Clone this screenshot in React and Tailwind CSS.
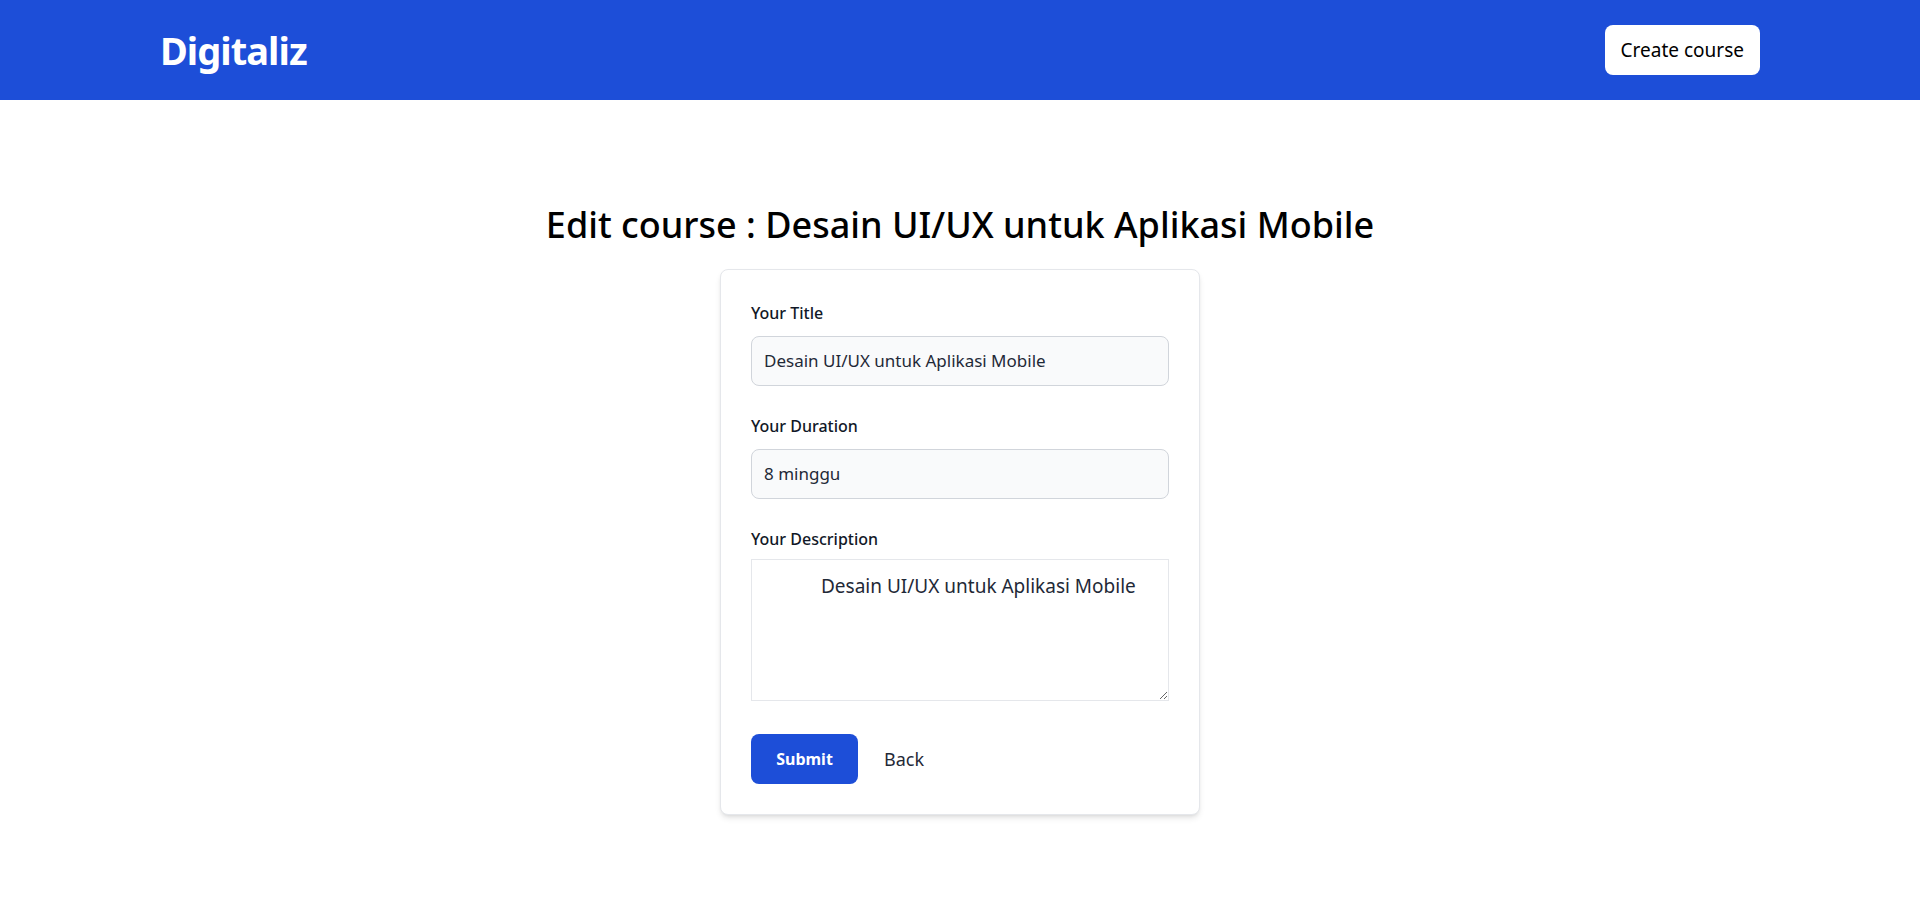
// App.jsx
// Edit course page: top nav bar + centered edit form card.

const font = { fontFamily: '"Noto Sans", "Open Sans", sans-serif' };

function Navbar() {
  return (
    <header className="bg-[#1d4ed8]">
      <div className="px-40 h-[100px] flex items-center justify-between">
        <a href="#" className="text-[38px] leading-10 font-bold text-white tracking-tight">
          Digitaliz
        </a>
        <button
          type="button"
          className="h-[50px] px-4 rounded-lg bg-white text-[19px] font-normal text-black"
        >
          Create course
        </button>
      </div>
    </header>
  );
}

function Field({ label, gap = 'mb-[11px]', children }) {
  return (
    <div>
      <label className={`block ${gap} text-base leading-6 font-medium text-[#111827]`}>
        {label}
      </label>
      {children}
    </div>
  );
}

export default function App() {
  const title = 'Desain UI/UX untuk Aplikasi Mobile';

  return (
    <div className="min-h-screen bg-white" style={font}>
      <Navbar />

      <main className="pt-[105px] pb-16 flex flex-col items-center">
        <h1 className="text-[36px] leading-10 font-medium text-black mb-6">
          Edit course : {title}
        </h1>

        {/* ── Form card ───────────────────────────────────────────── */}
        <form className="w-[480px] px-[30px] pt-[31px] pb-[30px] bg-white border border-[#e5e7eb] rounded-lg shadow-md space-y-[28px]">
          <Field label="Your Title">
            <input
              type="text"
              defaultValue={title}
              className="block w-full p-3 text-[17px] leading-6 text-[#1f2937] bg-[#f9fafb] border border-[#d1d5db] rounded-lg"
            />
          </Field>

          <Field label="Your Duration">
            <input
              type="text"
              defaultValue="8 minggu"
              className="block w-full p-3 text-[17px] leading-6 text-[#1f2937] bg-[#f9fafb] border border-[#d1d5db] rounded-lg"
            />
          </Field>

          <Field label="Your Description" gap="mb-2">
            <textarea
              defaultValue={title}
              className="block w-full h-[142px] pl-[69px] pt-3 pr-3 text-[19px] leading-7 text-[#1f2937] border border-[#e5e7eb]"
            />
          </Field>

          <div className="flex items-center gap-[26px] pt-[5px]">
            <button
              type="button"
              className="h-[50px] w-[107px] rounded-lg bg-[#1d4ed8] text-base font-bold text-white"
            >
              Submit
            </button>
            <a href="#" className="text-lg text-[#1f2937]">
              Back
            </a>
          </div>
        </form>
      </main>
    </div>
  );
}
